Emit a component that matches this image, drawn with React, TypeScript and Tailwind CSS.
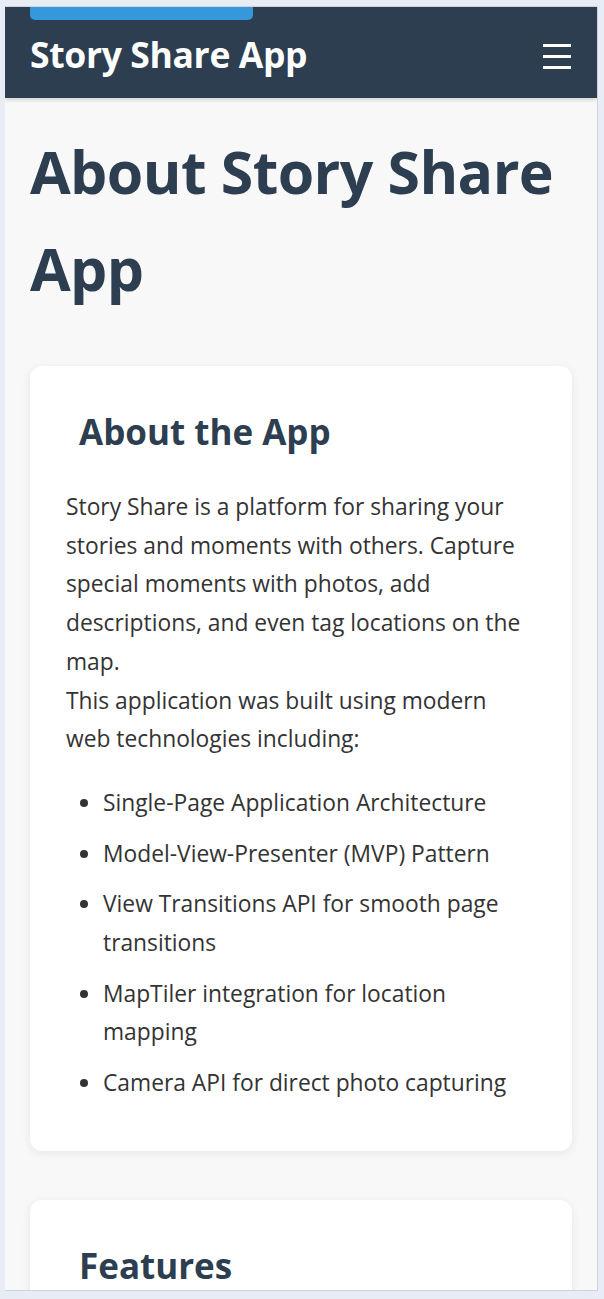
import React from "react";

const font = { fontFamily: '"Open Sans", "Noto Sans", sans-serif' };

export default function App() {
  return (
    <div className="min-h-[1299px] bg-[#e8edf5] pt-[6px] pl-[5px]" style={font}>
      <div className="w-[593px] h-[1285px] overflow-hidden border-t border-r border-b border-[#cfd4db] bg-[#f8f8f8]">
        <header className="relative h-[91px] bg-[#2c3e50] flex items-center justify-between pl-[25px] pr-[26px] shadow-[0_2px_4px_rgba(0,0,0,0.15)]">
          <div aria-hidden="true" className="absolute top-0 left-[25px] w-[223px] h-[13px] bg-[#3498db] rounded-b-[5px]" />
          <h1 className="text-white font-bold text-[35.5px] leading-none tracking-[-0.01em] mt-[5px]">Story Share App</h1>
          <button aria-label="Menu" className="flex flex-col gap-[8px] w-[28px] mt-[8px]">
            <span className="block h-[3px] w-[28px] bg-white" />
            <span className="block h-[3px] w-[28px] bg-white" />
            <span className="block h-[3px] w-[28px] bg-white" />
          </button>
        </header>
        <main className="px-[25px] pt-[25px]">
          <h1 className="text-[#2c3e50] font-bold text-[59px] leading-[97px] tracking-[-0.01em]">About Story Share App</h1>
          <section className="mt-[49px] bg-white rounded-[12px] shadow-[0_2px_10px_rgba(0,0,0,0.08)] pt-[45px] px-[36px] pb-[36px]">
            <h2 className="pl-[13px] text-[#2c3e50] font-bold text-[35px] leading-[41px]">About the App</h2>
            <p className="mt-[36px] text-[#333] text-[22.8px] leading-[38.7px] whitespace-nowrap">
              Story Share is a platform for sharing your
              <br />
              stories and moments with others. Capture
              <br />
              special moments with photos, add
              <br />
              descriptions, and even tag locations on the
              <br />
              map.
              <br />
              This application was built using modern
              <br />
              web technologies including:
            </p>
            <ul className="mt-[25px] list-disc pl-[37px] text-[#333] text-[22.8px] leading-[38.7px] whitespace-nowrap">
              <li className="mb-[12px]">Single-Page Application Architecture</li>
              <li className="mb-[12px]">Model-View-Presenter (MVP) Pattern</li>
              <li className="mb-[12px]">
                View Transitions API for smooth page
                <br />
                transitions
              </li>
              <li className="mb-[12px]">
                MapTiler integration for location
                <br />
                mapping
              </li>
              <li className="mb-[12px]">Camera API for direct photo capturing</li>
            </ul>
          </section>
          <section className="mt-[49px] h-[200px] bg-white rounded-[12px] shadow-[0_2px_10px_rgba(0,0,0,0.08)] pt-[45px] px-[36px] pb-[36px]">
            <h2 className="pl-[13px] text-[#2c3e50] font-bold text-[35px] leading-[41px]">Features</h2>
          </section>
        </main>
      </div>
    </div>
  );
}
